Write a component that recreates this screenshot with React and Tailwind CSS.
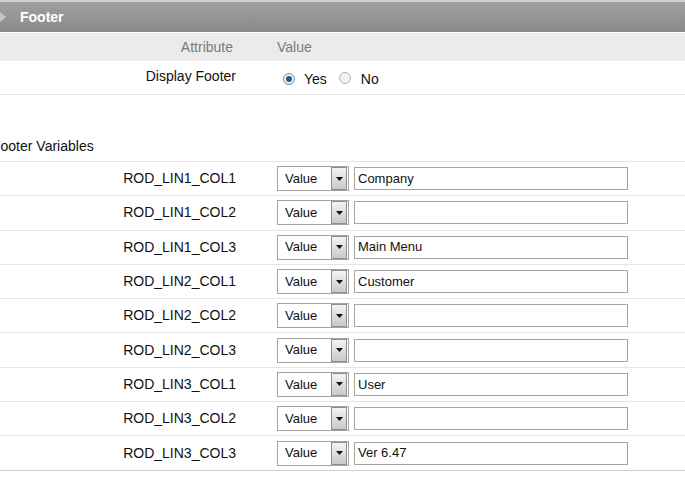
const rows = [
  { name: 'ROD_LIN1_COL1', value: 'Company' },
  { name: 'ROD_LIN1_COL2', value: '' },
  { name: 'ROD_LIN1_COL3', value: 'Main Menu' },
  { name: 'ROD_LIN2_COL1', value: 'Customer' },
  { name: 'ROD_LIN2_COL2', value: '' },
  { name: 'ROD_LIN2_COL3', value: '' },
  { name: 'ROD_LIN3_COL1', value: 'User' },
  { name: 'ROD_LIN3_COL2', value: '' },
  { name: 'ROD_LIN3_COL3', value: 'Ver 6.47' },
];

function Radio({ checked }) {
  return (
    <span
      className={
        'inline-flex h-[12px] w-[12px] items-center justify-center rounded-full border ' +
        (checked ? 'border-[#6f8ea8] bg-[#eef3f7]' : 'border-[#b5b5b5] bg-[#f2f2f2]')
      }
    >
      {checked && <span className="h-[6px] w-[6px] rounded-full bg-[#1f5f8f]" />}
    </span>
  );
}

function ValueSelect() {
  return (
    <div className="flex h-[25px] w-[72px] items-center border border-[#a3a3a3] bg-white">
      <span className="flex-1 pl-[7px] text-[13px] text-[#111]">Value</span>
      <span className="mr-[1px] flex h-[23px] w-[16px] items-center justify-center border border-[#8f8f8f] bg-gradient-to-b from-[#f4f4f4] to-[#c9c9c9]">
        <svg width="7" height="4" viewBox="0 0 7 4">
          <path d="M0 0h7L3.5 4z" fill="#111" />
        </svg>
      </span>
    </div>
  );
}

export default function App() {
  return (
    <div className="h-[488px] w-[685px] overflow-hidden bg-white font-['Liberation_Sans',Arial,sans-serif]">
      <div className="h-[2px] bg-[#cfcfcf]" />
      <div className="flex h-[30px] items-center bg-gradient-to-b from-[#a0a0a0] to-[#8a8a8a]">
        <svg width="8" height="12" viewBox="0 0 8 12">
          <path d="M0 1l6 5-6 5z" fill="#c4c4c4" />
        </svg>
        <span className="ml-[12px] text-[14px] font-bold text-white">Footer</span>
      </div>
      <div className="h-[1px] bg-white" />

      <div className="flex h-[28px] items-center bg-[#ebebeb] text-[14px] text-[#7a7a7a]">
        <span className="w-[233px] text-right">Attribute</span>
        <span className="ml-[44px]">Value</span>
      </div>
      <div className="flex h-[34px] items-center border-b border-[#e6e6e6] text-[14px] text-[#111]">
        <span className="w-[236px] pb-[2px] text-right">Display Footer</span>
        <div className="ml-[47px] flex items-center pt-[3px]">
          <Radio checked />
          <span className="ml-[9px]">Yes</span>
          <span className="ml-[12px]"><Radio /></span>
          <span className="ml-[10px]">No</span>
        </div>
      </div>

      <div className="flex h-[67px] items-end border-b border-[#e6e6e6] pb-[4px]">
        <span className="-ml-[8px] text-[14px] text-[#111]">Footer Variables</span>
      </div>

      {rows.map((r, i) => (
        <div
          key={r.name}
          className={
            'flex h-[34.3px] items-center border-b ' +
            (i === rows.length - 1 ? 'border-[#cfcfcf]' : 'border-[#e6e6e6]')
          }
        >
          <span className="w-[236px] text-right text-[14px] text-[#111]">{r.name}</span>
          <div className="ml-[41px]">
            <ValueSelect />
          </div>
          <div className="ml-[5px] flex h-[23px] w-[274px] items-center border border-[#a5a5a5] bg-white pl-[3px] text-[13px] text-[#111]">
            {r.value}
          </div>
        </div>
      ))}
    </div>
  );
}
